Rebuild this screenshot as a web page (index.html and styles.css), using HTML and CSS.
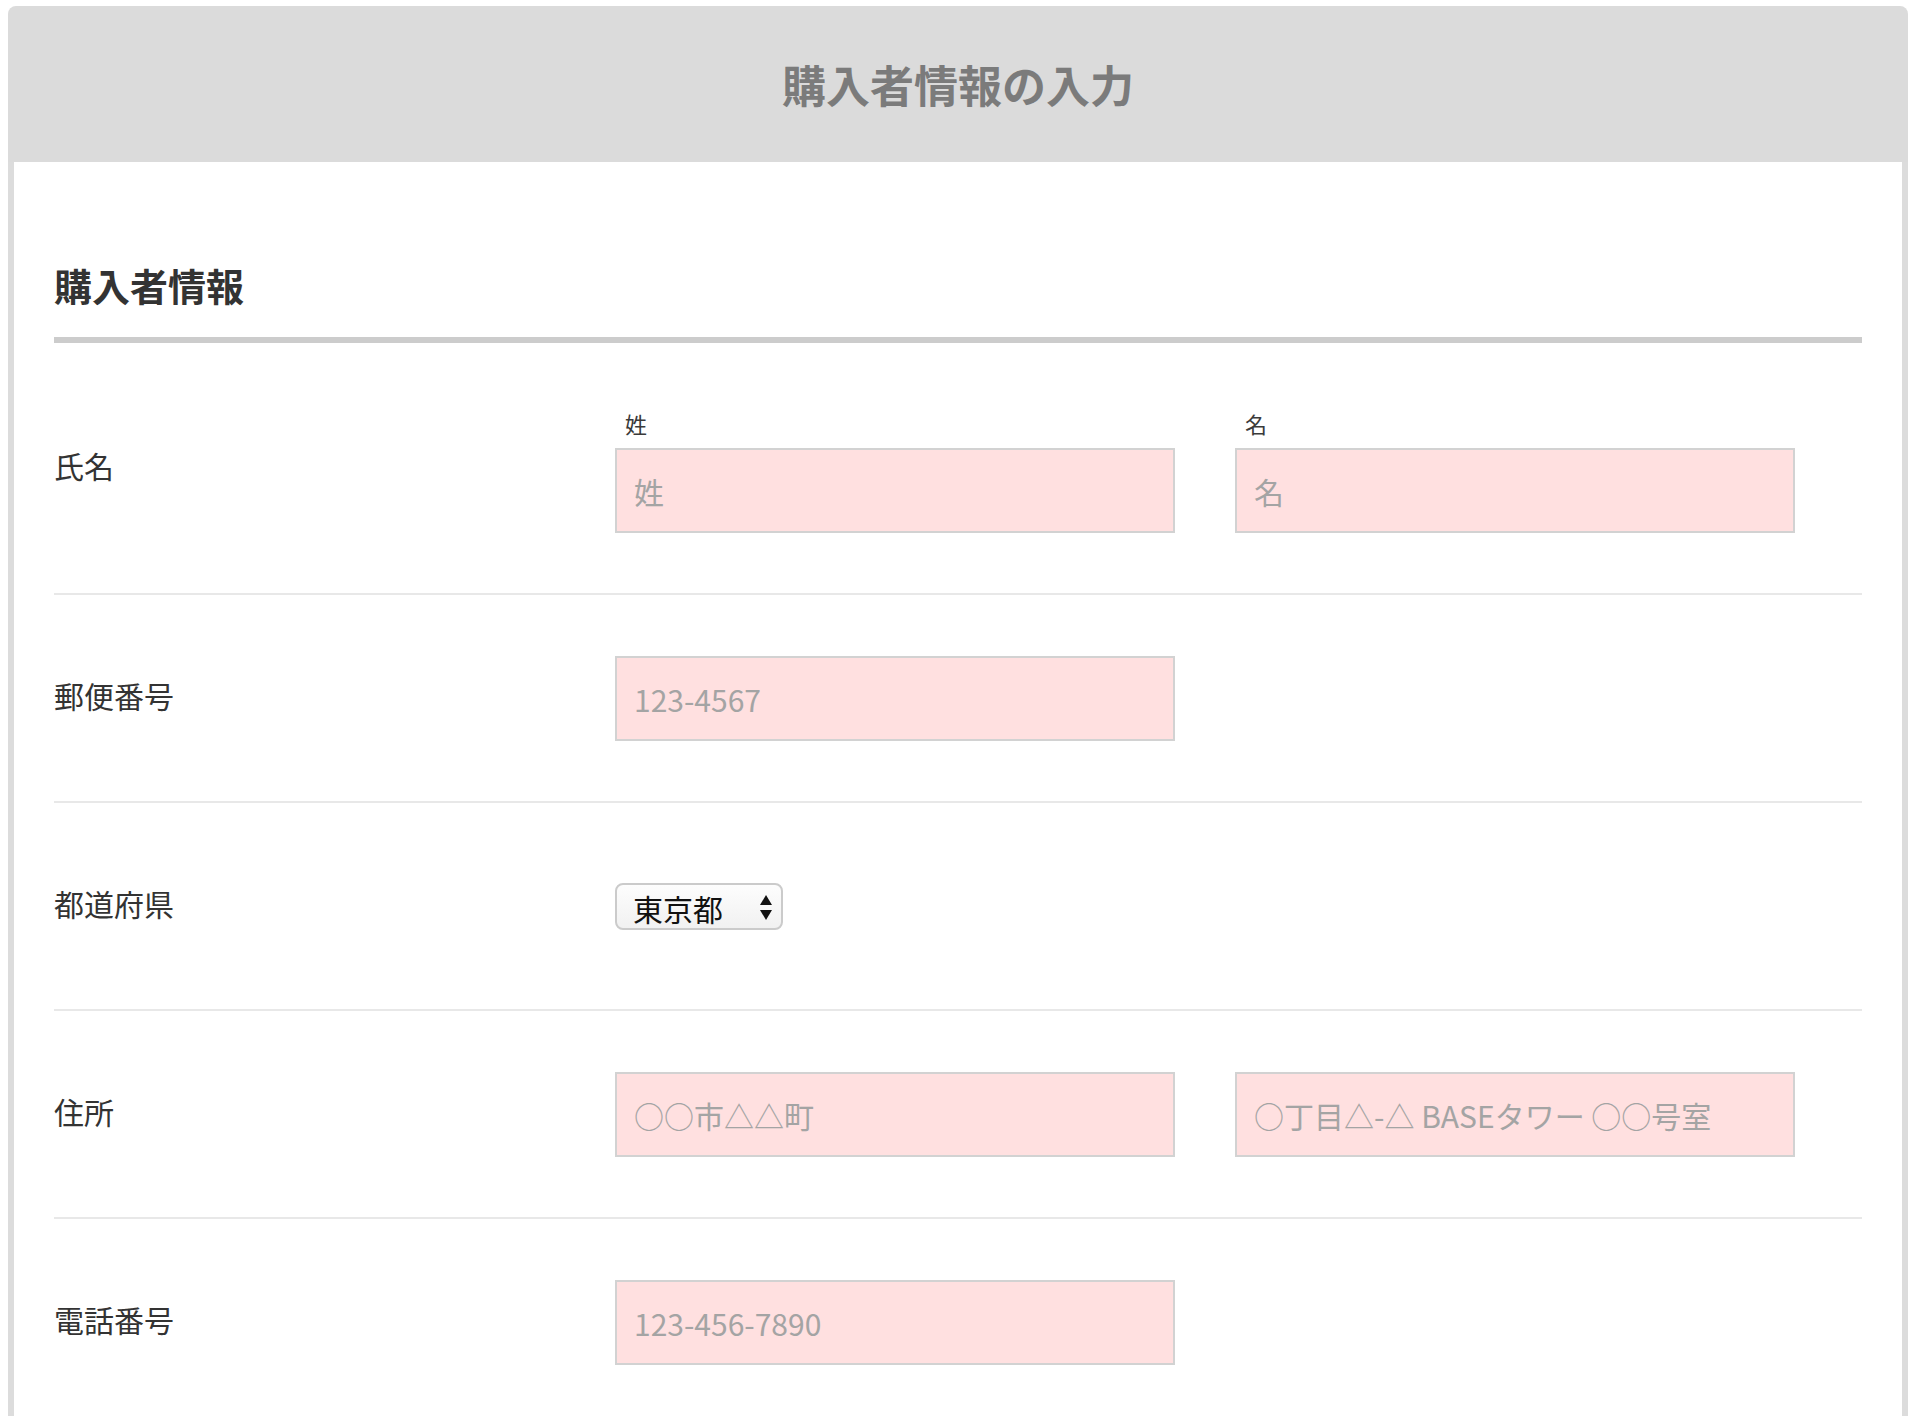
FILE: index.html
```html
<!DOCTYPE html>
<html lang="ja">
<head>
<meta charset="utf-8">
<title>購入者情報の入力</title>
<link rel="stylesheet" href="styles.css">
</head>
<body>
<div class="card">
  <header class="card-header">
    <h1 class="card-title">購入者情報の入力</h1>
  </header>
  <div class="card-body">
    <h2 class="section-title">購入者情報</h2>

    <div class="form-row">
      <div class="row-label">氏名</div>
      <div class="row-fields">
        <div class="field">
          <div class="sub-label">姓</div>
          <input class="text-input" type="text" placeholder="姓">
        </div>
        <div class="field">
          <div class="sub-label">名</div>
          <input class="text-input" type="text" placeholder="名">
        </div>
      </div>
    </div>

    <div class="form-row">
      <div class="row-label">郵便番号</div>
      <div class="row-fields">
        <div class="field">
          <input class="text-input" type="text" placeholder="123-4567">
        </div>
      </div>
    </div>

    <div class="form-row">
      <div class="row-label">都道府県</div>
      <div class="row-fields centered">
        <div class="select-box">
          <span class="select-value">東京都</span>
          <svg class="select-arrows" width="12" height="26" viewBox="0 0 12 26" aria-hidden="true">
            <path d="M6 0 L12 10 L0 10 Z" fill="#111"/>
            <path d="M0 15 L12 15 L6 25 Z" fill="#111"/>
          </svg>
        </div>
      </div>
    </div>

    <div class="form-row">
      <div class="row-label">住所</div>
      <div class="row-fields">
        <div class="field">
          <input class="text-input" type="text" placeholder="○○市△△町">
        </div>
        <div class="field">
          <input class="text-input" type="text" placeholder="○丁目△-△ BASEタワー ○○号室">
        </div>
      </div>
    </div>

    <div class="form-row last">
      <div class="row-label">電話番号</div>
      <div class="row-fields">
        <div class="field">
          <input class="text-input" type="text" placeholder="123-456-7890">
        </div>
      </div>
    </div>
  </div>
</div>
</body>
</html>
```

FILE: styles.css
```css
html, body {
  margin: 0;
  padding: 0;
  background: #ffffff;
  overflow: hidden;
}

body {
  font-family: "Noto Sans CJK JP", "Noto Sans", sans-serif;
  color: #333333;
}

.card {
  margin: 6px 18px 0 8px;
}

.card-header {
  height: 156px;
  background: #dbdbdb;
  border-radius: 8px 8px 0 0;
  display: flex;
  align-items: center;
  justify-content: center;
}

.card-title {
  margin: 0;
  font-size: 44px;
  line-height: 1;
  font-weight: 700;
  color: #7b7b7b;
}

.card-body {
  border-left: 6px solid #dcdcdc;
  border-right: 6px solid #dcdcdc;
  padding: 104px 40px 0 40px;
  background: #ffffff;
}

.section-title {
  margin: 0;
  font-size: 38px;
  line-height: 38px;
  font-weight: 700;
  color: #333333;
  padding-bottom: 33px;
  border-bottom: 6px solid #cccccc;
}

.form-row {
  display: grid;
  grid-template-columns: 561px 1fr;
  align-items: center;
  padding: 61px 0 60px 0;
  border-bottom: 2px solid #e8e8e8;
}

.form-row.last {
  border-bottom: none;
}

.row-label {
  font-size: 30px;
  line-height: 40px;
  color: #333333;
  margin-bottom: 8px;
}

.row-fields {
  display: flex;
  gap: 60px;
  align-items: flex-end;
  min-height: 85px;
  align-self: stretch;
}

.row-fields.centered {
  align-items: center;
}

.field {
  width: 560px;
  display: flex;
  flex-direction: column;
}

.sub-label {
  font-size: 22px;
  line-height: 39px;
  margin-bottom: 5px;
  color: #3a3a3a;
  padding-left: 10px;
}

.text-input {
  box-sizing: border-box;
  width: 560px;
  height: 85px;
  margin: 0;
  padding: 0 17px;
  border: 2px solid #d2d2d2;
  border-radius: 0;
  background: #ffe0e0;
  font-family: "Noto Sans CJK JP", "Noto Sans", sans-serif;
  font-size: 30px;
  font-weight: 400;
  color: #333333;
  outline: none;
}

.text-input::placeholder {
  color: #a4a4a4;
  opacity: 1;
}

.select-box {
  box-sizing: border-box;
  width: 168px;
  height: 47px;
  border: 2px solid #cbcbcb;
  border-radius: 8px;
  background: linear-gradient(#fdfdfd, #f1f1f1);
  display: flex;
  align-items: center;
  justify-content: space-between;
  padding: 2px 9px 0 16px;
}

.select-value {
  font-size: 30px;
  line-height: 1;
  color: #111111;
}

.select-arrows {
  display: block;
}
```
